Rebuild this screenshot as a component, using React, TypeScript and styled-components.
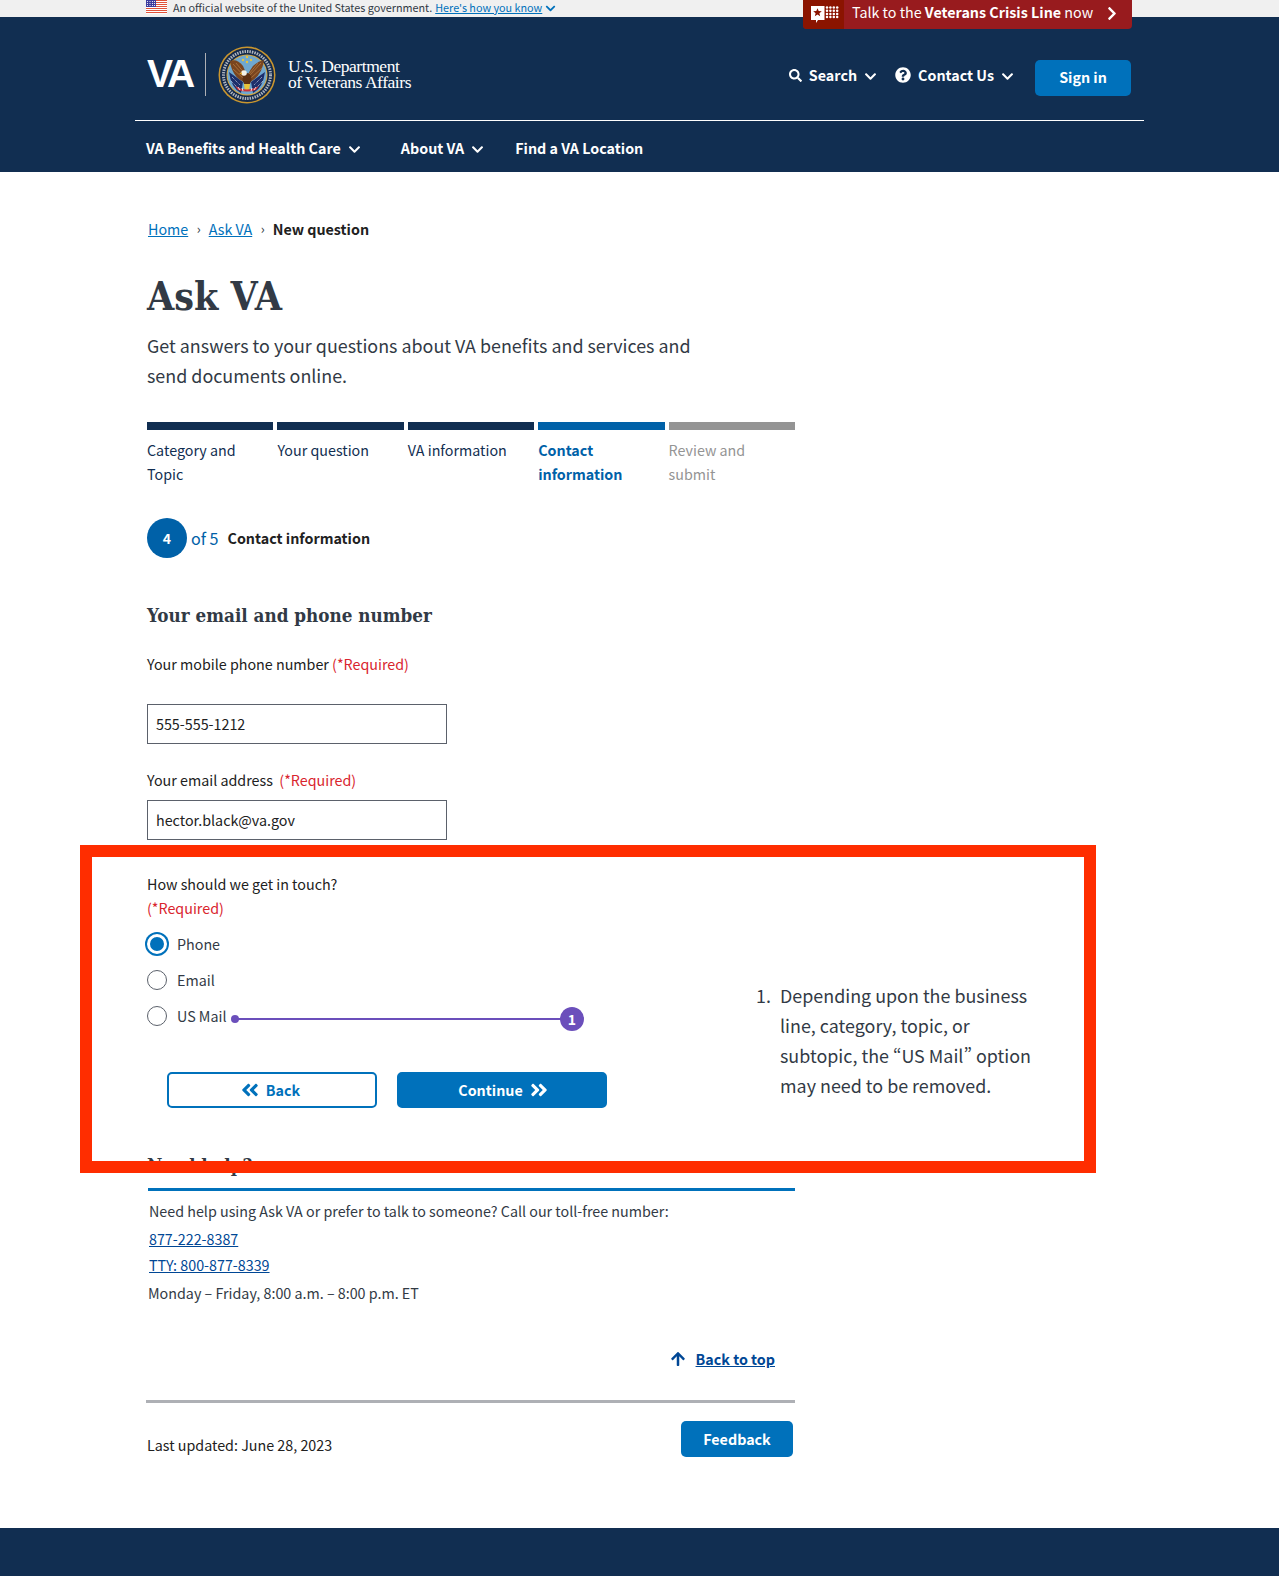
import React from "react";
import styled, { createGlobalStyle } from "styled-components";
import { FaSearch, FaQuestionCircle, FaChevronDown, FaChevronRight, FaAngleDoubleLeft, FaAngleDoubleRight, FaArrowUp } from "react-icons/fa";

const SANS = `"Noto Sans CJK SC", "Source Sans Pro", "Noto Sans", sans-serif`;
const SERIF = `"DejaVu Serif Condensed", "DejaVu Serif", "Liberation Serif", serif`;

const Global = createGlobalStyle`
  html, body { margin: 0; padding: 0; background: #fff; }
  body { font-family: ${SANS}; font-size: 14.3px; line-height: 24px; color: #212121; }
  * { box-sizing: border-box; }
`;

const Page = styled.div`
  position: relative;
  width: 1279px;
`;

const Banner = styled.div`
  height: 17px;
  background: #f0f0f0;
  padding: 0 0 3px 146px;
  display: flex;
  align-items: center;
  gap: 6px;
  font-size: 10.8px;
  line-height: 13px;
  color: #323a45;
  a { color: #0071bb; text-decoration: underline; margin-left: -3px; }
  svg.chev { color: #0071bb; width: 11px; height: 11px; margin: 2px 0 0 -3px; }
`;

const Crisis = styled.div`
  position: absolute;
  left: 803px;
  top: 0;
  width: 329px;
  height: 29px;
  display: flex;
  align-items: center;
  background: #981b1e;
  border-radius: 0 0 4px 4px;
  color: #fff;
  font-size: 14.3px;
  overflow: hidden;
  b { font-weight: 700; }
`;

const CrisisIcon = styled.div`
  width: 41px;
  height: 29px;
  background: #8b1400;
  display: flex;
  align-items: center;
  justify-content: center;
  padding-left: 3px;
  margin-right: 8px;
`;

const CrisisText = styled.span`
  flex: 1;
  margin-top: -5px;
  white-space: nowrap;
`;

const CrisisArrow = styled(FaChevronRight)`
  width: 16px;
  height: 15px;
  margin: -3px 12px 0 0;
`;

const Header = styled.header`
  background: #112e51;
  height: 155px;
  color: #fff;
`;

const HeaderTop = styled.div`
  height: 104px;
  margin: 0 135px;
  padding: 0 12px;
  border-bottom: 1px solid #fff;
  display: flex;
  align-items: center;
  justify-content: space-between;
`;

const Brand = styled.div`
  display: flex;
  align-items: center;
  margin-top: 12px;
`;

const VaMark = styled.span`
  font-family: "Liberation Sans", sans-serif;
  font-weight: 700;
  font-size: 39px;
  line-height: 41px;
  letter-spacing: -3px;
  width: 59px;
  border-right: 1px solid #aeb0b5;
  height: 43px;
`;

const DeptName = styled.div`
  font-family: "Liberation Serif", serif;
  font-size: 17.5px;
  line-height: 16px;
  letter-spacing: -0.45px;
  color: #fff;
  margin: -2px 0 0 12px;
`;

const Utilities = styled.div`
  display: flex;
  align-items: center;
  font-weight: 700;
  font-size: 14.3px;
  margin: 19px 1px 0 0;
`;

const Util = styled.span<{ $gap: number }>`
  display: inline-flex;
  align-items: center;
  gap: 7px;
  margin-right: ${(p) => p.$gap}px;
  margin-top: -6px;
`;

const SmallChev = styled(FaChevronDown)`
  width: 13px;
  height: 13px;
  margin-top: 3px;
`;

const SignIn = styled.button`
  width: 96px;
  height: 36px;
  border: none;
  border-radius: 5px;
  background: #0071bb;
  color: #fff;
  font: 700 14.3px/24px ${SANS};
  padding: 0 0 2px;
`;

const Menu = styled.nav`
  height: 51px;
  padding: 3px 0 0 146px;
  display: flex;
  align-items: center;
  font-weight: 700;
  font-size: 14.3px;
`;

const MenuItem = styled.span<{ $gap: number }>`
  display: inline-flex;
  align-items: center;
  gap: 7px;
  margin-right: ${(p) => p.$gap}px;
`;

const Main = styled.main`
  width: 648px;
  margin-left: 147px;
  padding-top: 45px;
`;

const Crumbs = styled.div`
  display: flex;
  align-items: center;
  height: 24px;
  padding-left: 1px;
  a { color: #0071bb; text-decoration: underline; }
  b { font-weight: 700; color: #212121; }
  i { font-style: normal; color: #323a45; margin: 0 8px 0 8.5px; font-size: 13px; }
`;

const Title = styled.h1`
  margin: 31px 0 0;
  font: 700 39px/48px ${SERIF};
  color: #323a45;
`;

const Intro = styled.p`
  margin: 10px 0 0;
  width: 560px;
  font-size: 17.9px;
  line-height: 30px;
  color: #323a45;
`;

const Steps = styled.div`
  margin-top: 32px;
  display: grid;
  grid-template-columns: repeat(5, 1fr);
  column-gap: 4px;
`;

const Step = styled.div<{ $color: string; $bold?: boolean }>`
  border-top: 8px solid ${(p) => p.$color};
  padding: 8px 24px 0 0;
  color: ${(p) => p.$color};
  font-weight: ${(p) => (p.$bold ? 700 : 400)};
  line-height: 24px;
`;

const StepSummary = styled.div`
  margin-top: 32px;
  display: flex;
  align-items: center;
`;

const StepDot = styled.div`
  width: 40px;
  height: 40px;
  border-radius: 50%;
  background: #0061a8;
  color: #fff;
  font-weight: 700;
  font-size: 14px;
  display: flex;
  align-items: center;
  justify-content: center;
`;

const StepOf = styled.span`
  font-size: 16.1px;
  color: #0061a8;
  margin: 0 9px 0 4px;
`;

const StepName = styled.b`
  color: #212121;
`;

const H2 = styled.h2<{ $top: number }>`
  margin: ${(p) => p.$top}px 0 0;
  font: 700 18.7px/28px ${SERIF};
  color: #323a45;
`;

const Label = styled.div<{ $top: number }>`
  margin-top: ${(p) => p.$top}px;
  color: #212121;
  em { font-style: normal; color: #d9252e; }
`;

const Input = styled.div<{ $top: number }>`
  margin-top: ${(p) => p.$top}px;
  width: 300px;
  height: 40px;
  border: 1px solid #5b616b;
  padding: 0 8px;
  display: flex;
  align-items: center;
  color: #212121;
`;

const Radios = styled.div`
  margin-top: 6px;
`;

const RadioRow = styled.div`
  height: 36px;
  display: flex;
  align-items: center;
  gap: 10px;
  color: #323a45;
`;

const Radio = styled.span<{ $on?: boolean }>`
  width: 20px;
  height: 20px;
  border-radius: 50%;
  background: ${(p) => (p.$on ? "#0071bb" : "#fff")};
  border: ${(p) => (p.$on ? "3px solid #fff" : "1px solid #5b616b")};
  box-shadow: ${(p) => (p.$on ? "0 0 0 2px #0071bb" : "none")};
`;

const Buttons = styled.div`
  margin: 38px 0 0 20px;
  display: flex;
  gap: 20px;
`;

const NavButton = styled.div<{ $outline?: boolean }>`
  width: 210px;
  height: 36px;
  border-radius: 5px;
  display: flex;
  align-items: center;
  justify-content: center;
  gap: 6px;
  padding: ${(p) => (p.$outline ? "0 4px 0 0" : "0 0 0 3px")};
  font-weight: 700;
  background: ${(p) => (p.$outline ? "#fff" : "#0071bb")};
  color: ${(p) => (p.$outline ? "#0071bb" : "#fff")};
  border: 2px solid #0071bb;
  svg { width: 20px; height: 20px; }
`;

const HelpBox = styled.div`
  margin: 9px 0 0 1px;
  border-top: 3px solid #0071bb;
  padding: 8px 0 0 1px;
  width: 647px;
  color: #323a45;
`;

const HelpLink = styled.a<{ $top: number }>`
  display: block;
  width: max-content;
  margin-top: ${(p) => p.$top}px;
  color: #004795;
  text-decoration: underline;
`;

const HelpHours = styled.div`
  margin: 4px 0 0 -1px;
`;

const BackTop = styled.div`
  margin-top: 42px;
  display: flex;
  justify-content: flex-end;
  align-items: center;
  gap: 10px;
  padding-right: 20px;
  font-weight: 700;
  a { color: #004795; text-decoration: underline; }
  svg { width: 16px; height: 16px; color: #004795; }
`;

const Divider = styled.hr`
  margin: 29px 0 0 -1px;
  border: none;
  height: 3px;
  background: #aeb0b5;
  width: 649px;
`;

const MetaRow = styled.div`
  margin-top: 18px;
  display: flex;
  justify-content: space-between;
  align-items: flex-start;
  padding-right: 2px;
`;

const Updated = styled.span`
  margin-top: 12px;
  color: #212121;
`;

const Feedback = styled.div`
  width: 112px;
  height: 36px;
  background: #0071bb;
  color: #fff;
  font-weight: 700;
  border-radius: 5px;
  display: flex;
  align-items: center;
  justify-content: center;
`;

const Footer = styled.footer`
  margin-top: 71px;
  height: 48px;
  background: #112e51;
`;

const Callout = styled.div`
  position: absolute;
  left: 80px;
  top: 845px;
  width: 1016px;
  height: 328px;
  border: 12px solid #ff2d00;
  pointer-events: none;
`;

const Leader = styled.div`
  position: absolute;
  left: 143px;
  top: 161px;
  width: 337px;
  height: 2px;
  background: #6b4fbb;
  &::before {
    content: "";
    position: absolute;
    left: -4px;
    top: -3px;
    width: 8px;
    height: 8px;
    border-radius: 50%;
    background: #6b4fbb;
  }
`;

const Badge = styled.div`
  position: absolute;
  right: -12px;
  top: -11px;
  width: 24px;
  height: 24px;
  border-radius: 50%;
  background: #6b4fbb;
  color: #fff;
  font-weight: 700;
  font-size: 14px;
  line-height: 24px;
  text-align: center;
`;

const Note = styled.div`
  position: absolute;
  left: 664px;
  top: 123px;
  width: 290px;
  display: flex;
  font-size: 17.9px;
  line-height: 30px;
  color: #323a45;
`;

const NoteNum = styled.span`
  flex: none;
  width: 24px;
`;

const NoteText = styled.p`
  margin: 0;
  width: 262px;
  font-feature-settings: "pwid" 1;
`;

const Flag = () => (
  <svg width="21" height="14" viewBox="0 0 21 14" style={{ flex: "none" }}>
    <rect width="21" height="14" fill="#fff" />
    {[0, 2, 4, 6, 8, 10, 12].map((y) => (
      <rect key={y} y={y} width="21" height="1" fill="#e0523a" />
    ))}
    <rect width="10" height="7" fill="#3c3b9e" />
    {[1.5, 4, 6.5, 8.5].map((x) => [1.5, 3.5, 5.5].map((y) => <circle key={`${x}${y}`} cx={x} cy={y} r="0.6" fill="#fff" />))}
  </svg>
);

const CrisisGlyph = () => (
  <svg width="30" height="19" viewBox="0 0 30 19">
    <path d="M1 1h13.500v14H8l-2 3v-3H1z" fill="#fff" />
    <path d="M7.500 3.200l1.200 2.900 3.100.2-2.400 2 .8 3-2.700-1.700-2.700 1.700.8-3-2.400-2 3.100-.2z" fill="#8b1400" />
    {[17, 20.400, 23.800, 27.200].map((x) =>
      [2.500, 5.700, 8.900, 12.100].map((y) => <circle key={`${x}-${y}`} cx={x} cy={y} r="1.250" fill="#fff" />)
    )}
  </svg>
);

const Seal = () => (
  <svg width="58" height="58" viewBox="0 0 58 58" style={{ marginLeft: 12 }}>
    <circle cx="29" cy="29" r="28.500" fill="#c9962f" />
    <circle cx="29" cy="29" r="27" fill="#13294b" />
    <circle cx="29" cy="29" r="23.500" fill="none" stroke="#aeb4bd" strokeWidth="3" strokeDasharray="1.500 1" />
    <circle cx="29" cy="29" r="20.500" fill="#d9a63a" />
    <circle cx="29" cy="29" r="19.500" fill="#6fa8d0" />
    <path d="M11 26l14 10-2 11q-10-5-12-21zM47 26L33 36l2 11q10-5 12-21z" fill="#1d2f6b" />
    <path d="M14 31l8 8M13 35l8 8M44 31l-8 8M45 35l-8 8" stroke="#dfe6f2" strokeWidth="0.800" strokeDasharray="1 1" />
    <path d="M12 15q7-3 13 5 3 5 3 11l-2 5q-12-5-14-21z" fill="#7a4520" />
    <path d="M46 14q-6 1-11 6-4 5-6 11l3 5q12-6 14-22z" fill="#7a4520" />
    <path d="M15 18l11 12M18 17l9 11M15 23l10 9M43 17L32 29M40 17l-9 11M44 22l-11 10" stroke="#a8703a" strokeWidth="1" />
    <ellipse cx="29" cy="33" rx="4.500" ry="6" fill="#5e3013" />
    <circle cx="26" cy="27" r="2.800" fill="#f4f1e8" />
    <path d="M24 26.500l-3 1 3 1z" fill="#e8b02f" />
    <path d="M26 38h6l-1 7h-4z" fill="#e8c23a" />
    <path d="M17 40q12 7 24 0l-3 4q-9 3-18 0z" fill="#c8323a" />
    <path d="M20 41l2 3M24 42l1 3M34 42l-1 3M38 41l-2 3" stroke="#fff" strokeWidth="0.800" />
    <circle cx="29" cy="11" r="1.200" fill="#e8c23a" />
    <circle cx="25" cy="14" r="1.200" fill="#e8c23a" />
    <circle cx="33" cy="14" r="1.200" fill="#e8c23a" />
    <circle cx="29" cy="16" r="1.200" fill="#e8c23a" />
  </svg>
);

export default function App() {
  return (
    <Page>
      <Global />
      <Banner>
        <Flag />
        <span>An official website of the United States government.</span>
        <a>Here's how you know</a>
        <FaChevronDown className="chev" />
      </Banner>
      <Header>
        <HeaderTop>
          <Brand>
            <VaMark>VA</VaMark>
            <Seal />
            <DeptName>
              U.S. Department
              <br />
              of Veterans Affairs
            </DeptName>
          </Brand>
          <Utilities>
            <Util $gap={18}>
              <FaSearch size={13} />
              Search
              <SmallChev />
            </Util>
            <Util $gap={21}>
              <FaQuestionCircle size={16} />
              Contact Us
              <SmallChev />
            </Util>
            <SignIn>Sign in</SignIn>
          </Utilities>
        </HeaderTop>
        <Menu>
          <MenuItem $gap={40}>
            VA Benefits and Health Care
            <SmallChev />
          </MenuItem>
          <MenuItem $gap={31}>
            About VA
            <SmallChev />
          </MenuItem>
          <MenuItem $gap={0}>Find a VA Location</MenuItem>
        </Menu>
      </Header>
      <Crisis>
        <CrisisIcon>
          <CrisisGlyph />
        </CrisisIcon>
        <CrisisText>
          Talk to the <b>Veterans Crisis Line</b> now
        </CrisisText>
        <CrisisArrow />
      </Crisis>
      <Main>
        <Crumbs>
          <a>Home</a>
          <i>›</i>
          <a>Ask VA</a>
          <i>›</i>
          <b>New question</b>
        </Crumbs>
        <Title>Ask VA</Title>
        <Intro>Get answers to your questions about VA benefits and services and send documents online.</Intro>
        <Steps>
          <Step $color="#112e51">Category and Topic</Step>
          <Step $color="#112e51">Your question</Step>
          <Step $color="#112e51">VA information</Step>
          <Step $color="#0061a8" $bold>
            Contact information
          </Step>
          <Step $color="#949494">Review and submit</Step>
        </Steps>
        <StepSummary>
          <StepDot>4</StepDot>
          <StepOf>of 5</StepOf>
          <StepName>Contact information</StepName>
        </StepSummary>
        <H2 $top={43}>Your email and phone number</H2>
        <Label $top={23}>
          Your mobile phone number <em>(*Required)</em>
        </Label>
        <Input $top={28}>555-555-1212</Input>
        <Label $top={24}>
          Your email address&nbsp; <em>(*Required)</em>
        </Label>
        <Input $top={8}>hector.black@va.gov</Input>
        <Label $top={32}>
          How should we get in touch?
          <br />
          <em>(*Required)</em>
        </Label>
        <Radios>
          <RadioRow>
            <Radio $on />
            Phone
          </RadioRow>
          <RadioRow>
            <Radio />
            Email
          </RadioRow>
          <RadioRow>
            <Radio />
            US Mail
          </RadioRow>
        </Radios>
        <Buttons>
          <NavButton $outline>
            <FaAngleDoubleLeft />
            Back
          </NavButton>
          <NavButton>
            Continue
            <FaAngleDoubleRight />
          </NavButton>
        </Buttons>
        <H2 $top={43}>Need help?</H2>
        <HelpBox>
          Need help using Ask VA or prefer to talk to someone? Call our toll-free number:
          <HelpLink $top={4}>877-222-8387</HelpLink>
          <HelpLink $top={2}>TTY: 800-877-8339</HelpLink>
          <HelpHours>Monday – Friday, 8:00 a.m. – 8:00 p.m. ET</HelpHours>
        </HelpBox>
        <BackTop>
          <FaArrowUp />
          <a>Back to top</a>
        </BackTop>
        <Divider />
        <MetaRow>
          <Updated>Last updated: June 28, 2023</Updated>
          <Feedback>Feedback</Feedback>
        </MetaRow>
      </Main>
      <Footer />
      <Callout>
        <Leader>
          <Badge>1</Badge>
        </Leader>
        <Note>
          <NoteNum>1.</NoteNum>
          <NoteText>Depending upon the business line, category, topic, or subtopic, the “US Mail” option may need to be removed.</NoteText>
        </Note>
      </Callout>
    </Page>
  );
}
